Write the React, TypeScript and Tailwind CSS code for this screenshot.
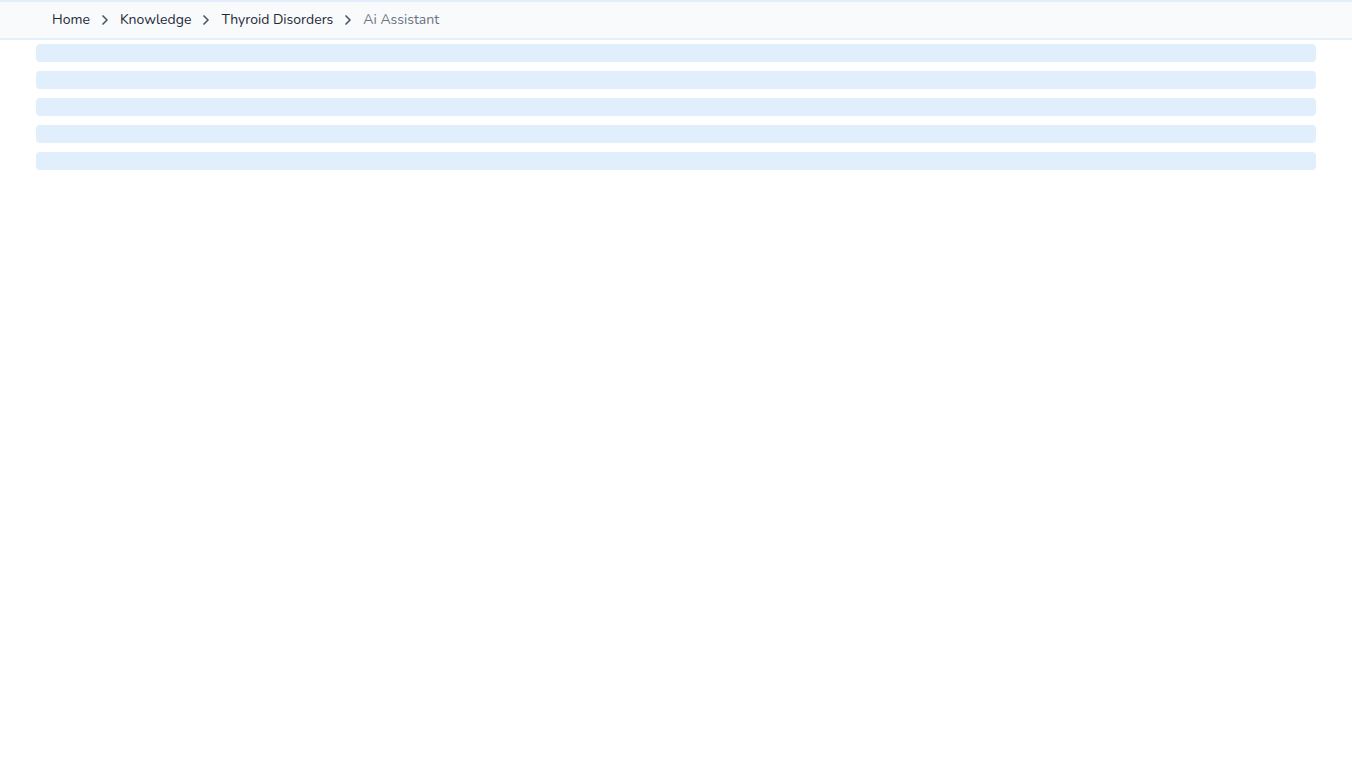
import { ChevronRight } from 'lucide-react'

const CRUMBS = ['Home', 'Knowledge', 'Thyroid Disorders']

export default function App() {
  return (
    <div className="min-h-screen bg-white font-['Nunito','Open_Sans',sans-serif]">
      <nav className="flex h-10 items-center border-y-2 border-t-[#e3edfb] border-b-[#e6f0fb] bg-[#f8fafc] px-[52px] text-sm">
        {CRUMBS.map((c) => (
          <span key={c} className="flex items-center">
            <span className="text-[#1f2937]">{c}</span>
            <ChevronRight className="mx-[7px] h-4 w-4 text-[#4b5563]" strokeWidth={2.5} />
          </span>
        ))}
        <span className="text-[#6b7280]">Ai Assistant</span>
      </nav>

      <div className="flex flex-col gap-[9px] px-9 pt-1">
        {[0, 1, 2, 3, 4].map((i) => (
          <div key={i} className="h-[18px] rounded bg-[#e1eefc]" />
        ))}
      </div>
    </div>
  )
}
